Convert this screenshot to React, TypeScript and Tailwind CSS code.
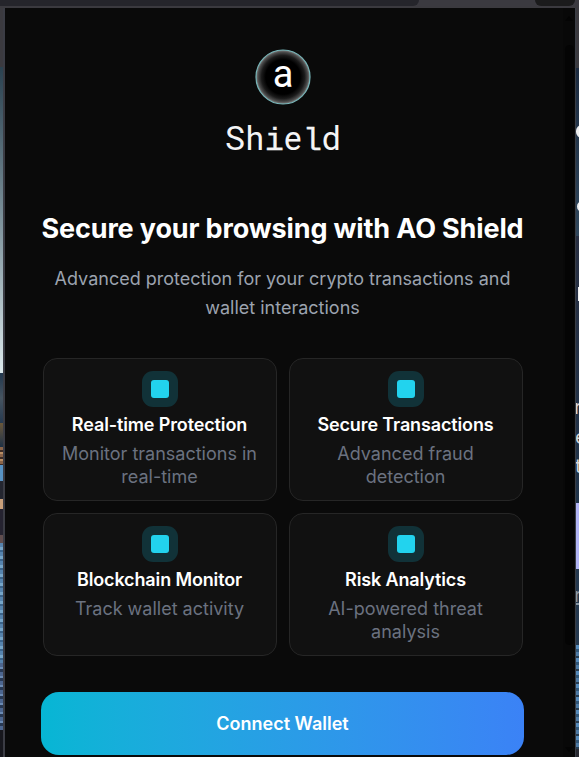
type Feature = { title: string; text: string };

const features: Feature[] = [
  { title: 'Real-time Protection', text: 'Monitor transactions in real-time' },
  { title: 'Secure Transactions', text: 'Advanced fraud detection' },
  { title: 'Blockchain Monitor', text: 'Track wallet activity' },
  { title: 'Risk Analytics', text: 'AI-powered threat analysis' },
];

function Logo() {
  return (
    <svg className="block h-[56px] w-[56px]" viewBox="0 0 56 56">
      <defs>
        <radialGradient id="orb">
          <stop offset="0.64" stopColor="#000" />
          <stop offset="0.8" stopColor="#1b1b1b" />
          <stop offset="0.92" stopColor="#4b4b4b" />
          <stop offset="1" stopColor="#858585" />
        </radialGradient>
      </defs>
      <circle cx="28" cy="28" r="27" fill="url(#orb)" stroke="#77b5b8" strokeWidth="1.2" />
      <text x="28" y="38" textAnchor="middle" fill="#fff" fontSize="38" fontFamily="Roboto, sans-serif">a</text>
    </svg>
  );
}

function Wordmark() {
  return (
    <div className="mt-[11px] h-[45px] whitespace-nowrap font-[Roboto,sans-serif] text-[33px] leading-[46px] text-[#f4f4f5]">
      <span className="tracking-[0.8px]">Sh</span>
      <span className="font-[Liberation_Mono,monospace] text-[32px] [-webkit-text-stroke:0.3px_#f4f4f5]">i</span>
      <span className="tracking-[1.4px]">e</span>
      <span className="font-[Liberation_Mono,monospace] text-[32px] [-webkit-text-stroke:0.3px_#f4f4f5]">l</span>
      <span>d</span>
    </div>
  );
}

function FeatureCard({ title, text }: Feature) {
  return (
    <div className="flex h-[143px] flex-col items-center rounded-[14px] border border-[#262626] bg-[#111111] px-3 pt-3 text-center">
      <div className="flex h-9 w-9 shrink-0 items-center justify-center rounded-[11px] bg-[#113238]">
        <div className="h-[18px] w-[18px] rounded-[3px] bg-[#22d3ee]" />
      </div>
      <h3 className="mr-px mt-1.5 whitespace-nowrap text-[18px] font-semibold leading-[23px] tracking-[-0.13px] text-white">{title}</h3>
      <p className="mr-px mt-1.5 text-[18px] leading-[23px] text-[#6b7280]">{text}</p>
    </div>
  );
}

function LeftBackdrop() {
  return (
    <div className="flex w-[5px] shrink-0 flex-col border-r-2 border-[#3b3c44]">
      <div className="h-[59px] bg-[#3b3a3f]" />
      <div className="h-[306px] bg-linear-to-b from-[#2b4250] via-[#7d929b] to-[#dce9ec]" />
      <div className="h-[50px] bg-linear-to-b from-[#22384e] via-[#465460] to-[#263a50]" />
      <div className="h-[24px] bg-linear-to-b from-[#6a5738] to-[#1d3044]" />
      <div className="h-[18px] bg-[repeating-linear-gradient(#8b6449_0_3px,#3e2c25_3px_5px,#b98e64_5px_7px)]" />
      <div className="h-[16px] bg-[#5792c3]" />
      <div className="h-[18px] bg-[#242630]" />
      <div className="h-[10px] bg-[#c9a07b]" />
      <div className="h-[26px] bg-[#252330]" />
      <div className="h-[8px] bg-[#604d4e]" />
      <div className="h-[120px] bg-[repeating-linear-gradient(#5683ad_0_4px,#76a5c8_4px_7px,#3b648b_7px_9px)]" />
      <div className="h-[67px] bg-[repeating-linear-gradient(#4c6690_0_4px,#6b8bb4_4px_6px,#273955_6px_9px)]" />
      <div className="relative flex-1 overflow-hidden bg-[#17171d]">
        <div className="absolute -left-[9px] top-[27px] h-5 w-3 rounded-full border-2 border-[#77777c]" />
      </div>
    </div>
  );
}

function RightBackdrop() {
  return (
    <div className="relative flex w-[4px] shrink-0 flex-col overflow-hidden border-l border-[#3a3e46] text-[20px] leading-[20px]">
      <div className="h-[60px] bg-[#3b3a3f]" />
      <div className="h-[168px] bg-linear-to-b from-[#1c2b40] to-[#30475c]" />
      <div className="h-[267px] bg-linear-to-b from-[#282f42] to-[#20344a]" />
      <div className="h-[66px] bg-[#b1b4f5]" />
      <div className="h-[76px] bg-[#25394f]" />
      <div className="h-[104px] bg-[repeating-linear-gradient(#568bbb_0_4px,#315779_4px_7px,#4e7ba5_7px_11px,#273d52_11px_13px)]" />
      <div className="flex-1 bg-[#292a31]" />
      <span className="absolute left-0 top-[117px] h-[13px] w-3 rounded-full bg-[#eeeeef]" />
      <span className="absolute left-px top-[193px] h-[11px] w-3 rounded-full bg-[#eeeeef]" />
      <span className="absolute left-[2px] top-[279px] h-[14px] w-[2px] bg-[#eeeeef]" />
      <span className="absolute -left-[2px] top-[389px] text-[#d5d7da]">r</span>
      <span className="absolute -left-px top-[419px] text-[#d5d7da]">e</span>
      <span className="absolute -left-px top-[448px] text-[#d5d7da]">t</span>
      <span className="absolute -left-[2px] top-[577px] text-[#8999a7] underline">r</span>
    </div>
  );
}

export default function App() {
  return (
    <div className="flex h-[757px] w-[579px] flex-col overflow-hidden bg-[#0a0a0a] font-[Inter,sans-serif]">
      <div className="flex h-[8px] shrink-0 justify-between overflow-hidden border-b-2 border-[#3b3a3f] bg-[#3b3a40]">
        <div className="w-[419px] rounded-br-md bg-[#25252b]" />
        <div className="mr-1 h-[6px] w-[40px] rounded-b-xl bg-[#1b1b1c]" />
      </div>
      <div className="flex min-h-0 flex-1">
        <LeftBackdrop />
        <main className="mr-[2px] flex w-[556px] shrink-0 flex-col items-center overflow-hidden">
          <div className="mt-[41px]"><Logo /></div>
          <Wordmark />
          <h1 className="mr-px mt-[51px] whitespace-nowrap text-[27px] font-bold leading-[34px] tracking-[-0.14px] text-white">Secure your browsing with AO Shield</h1>
          <p className="mr-px mt-[18px] w-[480px] text-center text-[18px] leading-[29px] text-[#9ca3af]">
            Advanced protection for your crypto transactions and wallet interactions
          </p>
          <div className="mt-[36px] grid w-[480px] shrink-0 grid-cols-2 gap-3">
            {features.map((feature) => <FeatureCard key={feature.title} {...feature} />)}
          </div>
          <button className="mr-px mt-9 h-[63px] w-[483px] shrink-0 rounded-[18px] bg-linear-to-r from-[#06b6d4] to-[#3b82f6] text-[18px] font-semibold text-white">
            Connect Wallet
          </button>
        </main>
        <aside className="flex w-[12px] shrink-0 flex-col items-center bg-[#080808] pt-2">
          <div className="h-0 w-0 border-x-4 border-b-5 border-x-transparent border-b-[#040404]" />
          <div className="mt-6 h-[600px] w-[9px] rounded-full bg-[#040404]" />
          <div className="mt-[102px] h-0 w-0 border-x-4 border-t-5 border-x-transparent border-t-[#040404]" />
        </aside>
        <RightBackdrop />
      </div>
    </div>
  );
}
